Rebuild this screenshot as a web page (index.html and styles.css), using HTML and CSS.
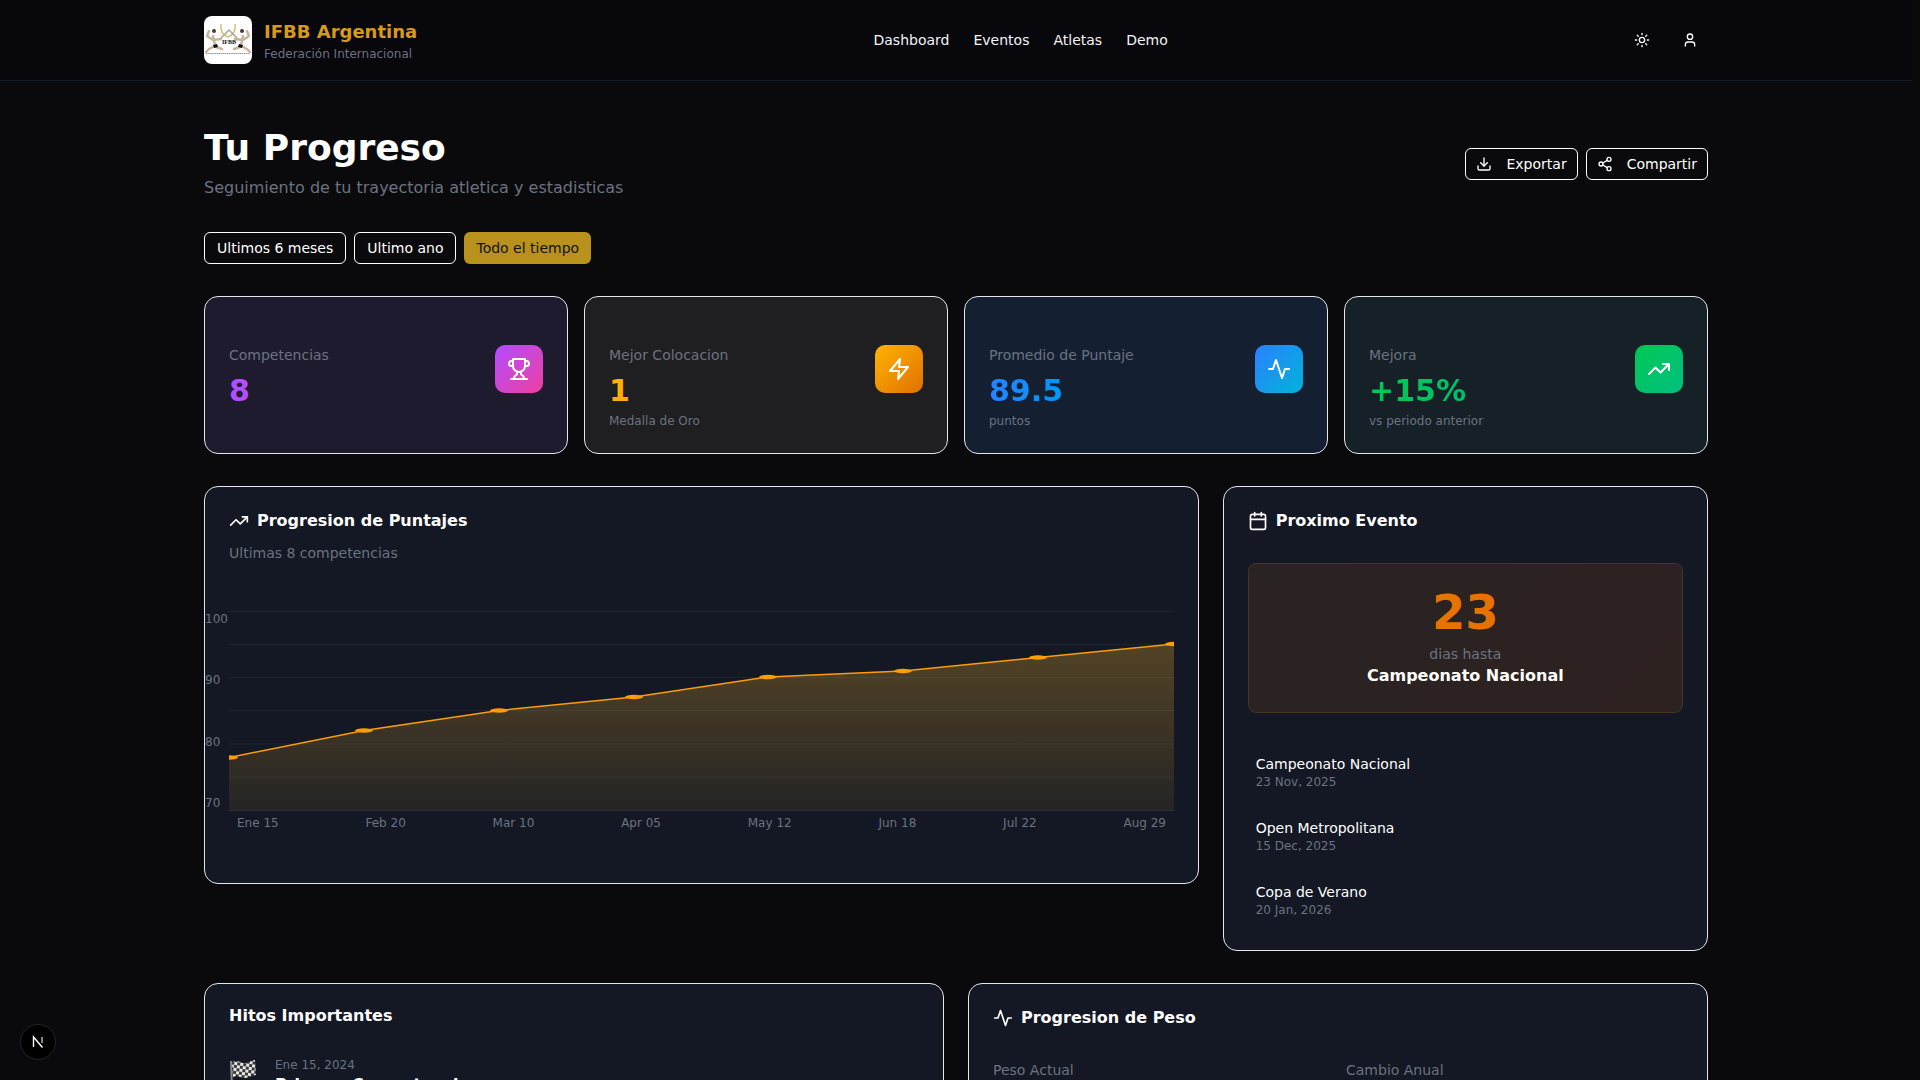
FILE: index.html
```html
<!DOCTYPE html>
<html lang="es">

<head>
    <meta charset="UTF-8">
    <title>IFBB Argentina - Tu Progreso</title>
    <link rel="stylesheet" href="styles.css">
</head>

<body>
    <header class="topbar">
        <div class="brand">
            <div class="brand-logo">
                <svg viewBox="0 0 48 48" width="48" height="48">
                    <path d="M17 8c-1 7 2 11 7 13 5-2 8-6 7-13" fill="none" stroke="#d9c07a" stroke-width="1.500"/>
                    <path d="M17 22l8-8 8 8" fill="none" stroke="#a9a49a" stroke-width="1.500"/>
                    <g class="logo-figure">
                        <path d="M5 15l-2 5 6 4 8-1"/>
                        <path d="M9 20l2 9"/>
                        <path d="M11 30l-6 3-3 3"/>
                        <path d="M12 31l6 2"/>
                        <path d="M43 15l2 5-6 4-8-1"/>
                        <path d="M39 20l-2 9"/>
                        <path d="M37 30l6 3 3 3"/>
                        <path d="M36 31l-6 2"/>
                    </g>
                    <circle cx="10" cy="15" r="2" fill="#4a3d30"/>
                    <circle cx="38" cy="15" r="2" fill="#4a3d30"/>
                    <path d="M9 29l4-1 1 3-4 1zM39 29l-4-1-1 3 4 1z" fill="#111"/>
                    <text x="25" y="28" class="logo-mark">IFBB</text>
                    <path d="M2 37.500h44" stroke="#8f8f8f" stroke-width="1" stroke-dasharray="1.500 .6"/>
                </svg>
            </div>
            <div>
                <div class="brand-name">IFBB Argentina</div>
                <div class="brand-sub">Federación Internacional</div>
            </div>
        </div>
        <nav class="topnav">
            <a>Dashboard</a>
            <a>Eventos</a>
            <a>Atletas</a>
            <a>Demo</a>
        </nav>
        <div class="topbar-actions">
            <svg class="icon-sm" viewBox="0 0 24 24"><circle cx="12" cy="12" r="4"/><path d="M12 2v2M12 20v2M4.930 4.930l1.410 1.410M17.660 17.660l1.410 1.410M2 12h2M20 12h2M6.340 17.660l-1.410 1.410M19.070 4.930l-1.410 1.410"/></svg>
            <svg class="icon-sm" viewBox="0 0 24 24"><path d="M19 21v-2a4 4 0 0 0-4-4H9a4 4 0 0 0-4 4v2"/><circle cx="12" cy="7" r="4"/></svg>
        </div>
    </header>

    <main class="page">
        <section class="page-head">
            <div>
                <h1>Tu Progreso</h1>
                <p class="page-sub">Seguimiento de tu trayectoria atletica y estadisticas</p>
            </div>
            <div class="head-actions">
                <button class="btn">
                    <svg class="icon-sm" viewBox="0 0 24 24"><path d="M21 15v4a2 2 0 0 1-2 2H5a2 2 0 0 1-2-2v-4"/><path d="M7 10l5 5 5-5"/><path d="M12 15V3"/></svg>
                    Exportar
                </button>
                <button class="btn">
                    <svg class="icon-sm" viewBox="0 0 24 24"><circle cx="18" cy="5" r="3"/><circle cx="6" cy="12" r="3"/><circle cx="18" cy="19" r="3"/><path d="M8.590 13.510l6.830 3.980M15.410 6.510l-6.820 3.980"/></svg>
                    Compartir
                </button>
            </div>
        </section>

        <div class="filters">
            <button class="pill">Ultimos 6 meses</button>
            <button class="pill">Ultimo ano</button>
            <button class="pill pill-active">Todo el tiempo</button>
        </div>

        <section class="stats">
            <div class="stat stat-purple">
                <div>
                    <div class="stat-label">Competencias</div>
                    <div class="stat-value">8</div>
                </div>
                <div class="stat-icon">
                    <svg class="icon-md" viewBox="0 0 24 24"><path d="M6 9H4.500a2.500 2.500 0 0 1 0-5H6"/><path d="M18 9h1.500a2.500 2.500 0 0 0 0-5H18"/><path d="M4 22h16"/><path d="M10 14.660V17c0 .55-.47.98-.97 1.210C7.850 18.750 7 20.240 7 22"/><path d="M14 14.660V17c0 .55.47.98.97 1.210C16.150 18.750 17 20.240 17 22"/><path d="M18 2H6v7a6 6 0 0 0 12 0V2z"/></svg>
                </div>
            </div>
            <div class="stat stat-amber">
                <div>
                    <div class="stat-label">Mejor Colocacion</div>
                    <div class="stat-value">1</div>
                    <div class="stat-note">Medalla de Oro</div>
                </div>
                <div class="stat-icon">
                    <svg class="icon-md" viewBox="0 0 24 24"><path d="M13 2L3 14h9l-1 8 10-12h-9l1-8z"/></svg>
                </div>
            </div>
            <div class="stat stat-blue">
                <div>
                    <div class="stat-label">Promedio de Puntaje</div>
                    <div class="stat-value">89.5</div>
                    <div class="stat-note">puntos</div>
                </div>
                <div class="stat-icon">
                    <svg class="icon-md" viewBox="0 0 24 24"><path d="M22 12h-4l-3 9L9 3l-3 9H2"/></svg>
                </div>
            </div>
            <div class="stat stat-green">
                <div>
                    <div class="stat-label">Mejora</div>
                    <div class="stat-value">+15%</div>
                    <div class="stat-note">vs periodo anterior</div>
                </div>
                <div class="stat-icon">
                    <svg class="icon-md" viewBox="0 0 24 24"><path d="M22 7l-8.500 8.500-5-5L2 17"/><path d="M16 7h6v6"/></svg>
                </div>
            </div>
        </section>

        <section class="row-main">
            <div class="card card-chart">
                <h2 class="card-title">
                    <svg class="icon-title" viewBox="0 0 24 24"><path d="M22 7l-8.500 8.500-5-5L2 17"/><path d="M16 7h6v6"/></svg>
                    Progresion de Puntajes
                </h2>
                <p class="card-sub">Ultimas 8 competencias</p>
                <div class="chart">
                    <div class="chart-y">
                        <span>100</span>
                        <span>90</span>
                        <span>80</span>
                        <span>70</span>
                    </div>
                    <svg class="chart-plot" viewBox="0 0 945 200" preserveAspectRatio="none">
                        <defs>
                            <linearGradient id="areaFill" x1="0" y1="0" x2="0" y2="1">
                                <stop offset="0" stop-color="#e6a92a" stop-opacity=".3"/>
                                <stop offset="1" stop-color="#e6a92a" stop-opacity=".08"/>
                            </linearGradient>
                        </defs>
                        <path d="M0 146.500L135 119.500L270 99.500L405 86L539 66L674 60L809 46.500L945 33L945 200L0 200Z" fill="url(#areaFill)"/>
                        <g class="chart-grid">
                            <path d="M0 .5H945M0 33.500H945M0 66.500H945M0 99.500H945M0 133H945M0 166H945M0 199.500H945"/>
                        </g>
                        <path class="chart-line" d="M0 146.500L135 119.500L270 99.500L405 86L539 66L674 60L809 46.500L945 33"/>
                        <g class="chart-dots">
                            <ellipse cx="0" cy="146.500" rx="9" ry="2.200"/>
                            <ellipse cx="135" cy="119.500" rx="9" ry="2.200"/>
                            <ellipse cx="270" cy="99.500" rx="9" ry="2.200"/>
                            <ellipse cx="405" cy="86" rx="9" ry="2.200"/>
                            <ellipse cx="539" cy="66" rx="9" ry="2.200"/>
                            <ellipse cx="674" cy="60" rx="9" ry="2.200"/>
                            <ellipse cx="809" cy="46.500" rx="9" ry="2.200"/>
                            <ellipse cx="945" cy="33" rx="9" ry="2.200"/>
                        </g>
                    </svg>
                    <div class="chart-x">
                        <span>Ene 15</span>
                        <span>Feb 20</span>
                        <span>Mar 10</span>
                        <span>Apr 05</span>
                        <span>May 12</span>
                        <span>Jun 18</span>
                        <span>Jul 22</span>
                        <span>Aug 29</span>
                    </div>
                </div>
            </div>

            <div class="card">
                <h2 class="card-title">
                    <svg class="icon-title" viewBox="0 0 24 24"><rect x="3" y="4" width="18" height="18" rx="2"/><path d="M16 2v4M8 2v4M3 10h18"/></svg>
                    Proximo Evento
                </h2>
                <div class="countdown">
                    <div class="countdown-num">23</div>
                    <div class="countdown-label">dias hasta</div>
                    <div class="countdown-name">Campeonato Nacional</div>
                </div>
                <ul class="events">
                    <li>
                        <div class="event-name">Campeonato Nacional</div>
                        <div class="event-date">23 Nov, 2025</div>
                    </li>
                    <li>
                        <div class="event-name">Open Metropolitana</div>
                        <div class="event-date">15 Dec, 2025</div>
                    </li>
                    <li>
                        <div class="event-name">Copa de Verano</div>
                        <div class="event-date">20 Jan, 2026</div>
                    </li>
                </ul>
            </div>
        </section>

        <section class="row-bottom">
            <div class="card">
                <h2 class="card-title card-title-plain">Hitos Importantes</h2>
                <div class="milestone">
                    <svg class="flag" viewBox="0 0 28 30">
                        <defs>
                            <pattern id="checks" width="6" height="6" patternUnits="userSpaceOnUse" patternTransform="rotate(8)">
                                <rect width="6" height="6" fill="#e8e8e8"/>
                                <rect width="3" height="3" fill="#3a3a3a"/>
                                <rect x="3" y="3" width="3" height="3" fill="#3a3a3a"/>
                            </pattern>
                        </defs>
                        <path d="M2 3l1 27" stroke="#8a8a8a" stroke-width="2"/>
                        <path d="M3 4c6-3 9 2 14 1 4-1 7-3 9-3l1 15c-4 0-6 3-11 3-4 0-8-3-12-1z" fill="url(#checks)"/>
                    </svg>
                    <div>
                        <div class="milestone-date">Ene 15, 2024</div>
                        <div class="milestone-name">Primera Competencia</div>
                    </div>
                </div>
            </div>
            <div class="card">
                <h2 class="card-title">
                    <svg class="icon-title" viewBox="0 0 24 24"><path d="M22 12h-4l-3 9L9 3l-3 9H2"/></svg>
                    Progresion de Peso
                </h2>
                <div class="weight-grid">
                    <div class="weight-label">Peso Actual</div>
                    <div class="weight-label">Cambio Anual</div>
                </div>
            </div>
        </section>
    </main>

    <div class="dev-badge">
        <svg viewBox="0 0 24 24" width="24" height="24"><path d="M7.500 17V7l9 10.500" fill="none" stroke="#fff" stroke-width="1.400"/><path d="M16 7v6" stroke="#bbb" stroke-width="1.400"/></svg>
    </div>
</body>

</html>
```

FILE: styles.css
```css
* {
    box-sizing: border-box;
}

html,
body {
    height: 1080px;
    margin: 0;
    overflow: hidden;
}

body {
    background-color: #0a0a0d;
    color: #fff;
    font-family: "DejaVu Sans", sans-serif;
    font-size: 14px;
    line-height: 20px;
}

h1,
h2,
p,
ul {
    margin: 0;
    padding: 0;
}

svg {
    display: block;
    flex: none;
}

/* icons */
.icon-sm,
.icon-md,
.icon-title {
    fill: none;
    stroke: #fff;
    stroke-linecap: round;
    stroke-linejoin: round;
    stroke-width: 2;
}

.icon-sm {
    width: 16px;
    height: 16px;
}

.icon-md {
    width: 24px;
    height: 24px;
}

.icon-title {
    width: 20px;
    height: 20px;
}

.topbar {
    align-items: center;
    background-color: #07070c;
    border-bottom: 1px solid #141824;
    display: flex;
    height: 81px;
    justify-content: space-between;
    margin-right: 8px;
    padding: 0 0 0 204px;
}

.brand {
    align-items: center;
    display: flex;
    gap: 12px;
    width: 669.500px;
}

.brand-logo {
    background-color: #fff;
    border-radius: 8px;
    height: 48px;
    overflow: hidden;
    width: 48px;
}

.logo-figure path {
    fill: none;
    stroke: #c8b49c;
    stroke-linecap: round;
    stroke-linejoin: round;
    stroke-width: 2.400;
}

.logo-mark {
    fill: #111;
    font-family: "Liberation Serif", serif;
    font-size: 6px;
    font-weight: bold;
    text-anchor: middle;
}

.brand-name {
    color: #d69a1a;
    font-size: 18px;
    font-weight: bold;
    line-height: 28px;
}

.brand-sub {
    color: #6b7280;
    font-size: 12px;
    line-height: 16px;
}

.topnav {
    display: flex;
    gap: 24px;
    flex: 1;
}

.topnav a {
    color: #f3f4f6;
}

.topbar-actions {
    align-items: center;
    display: flex;
    gap: 32px;
    padding-right: 214px;
}

/* page */
.page {
    padding: 0 212px 0 204px;
}

.page-head {
    align-items: center;
    display: flex;
    justify-content: space-between;
    padding-top: 47px;
}

h1 {
    font-size: 36px;
    font-weight: bold;
    line-height: 40px;
}

.page-sub {
    color: #6b7280;
    font-size: 16px;
    line-height: 24px;
    margin-top: 8px;
}

.head-actions {
    display: flex;
    gap: 8px;
}

.btn,
.pill {
    background-color: transparent;
    border: 1px solid #fff;
    border-radius: 6px;
    color: #fff;
    font-family: inherit;
    font-size: 14px;
    height: 32px;
    line-height: 20px;
    padding: 0 12px;
}

.btn {
    align-items: center;
    display: flex;
    gap: 14px;
    padding: 0 10px;
}

.filters {
    display: flex;
    gap: 8px;
    margin-top: 32px;
}

.pill-active {
    background-color: #b8921c;
    border: none;
    color: #111;
}

/* stat cards */
.stats {
    display: grid;
    gap: 16px;
    grid-template-columns: repeat(4, 1fr);
    margin-top: 32px;
}

.stat {
    align-items: flex-start;
    border: 1px solid #e5e7eb;
    border-radius: 14px;
    display: flex;
    justify-content: space-between;
    min-height: 158px;
    padding: 48px 24px 23px;
}

.stat-purple {
    background-color: #1d1b2d;
}

.stat-amber {
    background-color: #1f1f21;
}

.stat-blue {
    background-color: #142032;
}

.stat-green {
    background-color: #152127;
}

.stat-label {
    color: #6b7280;
}

.stat-value {
    font-size: 30px;
    font-weight: bold;
    line-height: 36px;
    margin-top: 8px;
    width: fit-content;
}

.stat-note {
    color: #6b7280;
    font-size: 12px;
    line-height: 16px;
    margin-top: 4px;
}

.stat-purple .stat-value {
    color: #b44dff;
}

.stat-amber .stat-value {
    color: #ffb000;
}

.stat-blue .stat-value {
    background: linear-gradient(90deg, #2583ff, #0097f5);
    -webkit-background-clip: text;
    background-clip: text;
    color: transparent;
}

.stat-green .stat-value {
    background: linear-gradient(90deg, #00c853, #00bf6a);
    -webkit-background-clip: text;
    background-clip: text;
    color: transparent;
}

.stat-icon {
    align-items: center;
    border-radius: 10px;
    display: flex;
    height: 48px;
    justify-content: center;
    width: 48px;
}

.stat-purple .stat-icon {
    background: linear-gradient(135deg, #b14dff, #ef3fa0);
}

.stat-amber .stat-icon {
    background: linear-gradient(135deg, #ffb400, #e07000);
}

.stat-blue .stat-icon {
    background: linear-gradient(135deg, #2b80ff, #00b4d8);
}

.stat-green .stat-icon {
    background: linear-gradient(135deg, #00c853, #00bf7f);
}

/* cards */
.row-main {
    align-items: start;
    display: grid;
    gap: 24px;
    grid-template-columns: repeat(3, 1fr);
    margin-top: 32px;
}

.card {
    background-color: #141824;
    border: 1px solid #e5e7eb;
    border-radius: 14px;
    padding: 24px;
}

.card-chart {
    grid-column: span 2;
    height: 398px;
}

.card-title {
    align-items: center;
    display: flex;
    font-size: 16px;
    font-weight: bold;
    gap: 8px;
    line-height: 20px;
}

.card-title-plain {
    line-height: 16px;
}

.card-sub {
    color: #6b7280;
    margin-top: 12px;
}

/* chart */
.chart {
    height: 240px;
    margin-top: 36px;
    position: relative;
}

.chart-plot {
    height: 200px;
    left: 0;
    position: absolute;
    top: 12px;
    width: 945px;
}

.chart-grid path {
    fill: none;
    stroke: rgba(255, 255, 255, .05);
    stroke-width: 1;
    vector-effect: non-scaling-stroke;
}

.chart-line {
    fill: none;
    stroke: #ff9d00;
    stroke-width: 1.500;
    vector-effect: non-scaling-stroke;
}

.chart-dots ellipse {
    fill: #ff9d00;
}

.chart-y {
    color: #6b7280;
    display: flex;
    flex-direction: column;
    font-size: 12px;
    height: 200px;
    justify-content: space-between;
    left: -24px;
    line-height: 16px;
    position: absolute;
    top: 12px;
}

.chart-x {
    color: #6b7280;
    display: flex;
    font-size: 12px;
    justify-content: space-between;
    left: 0;
    line-height: 16px;
    padding: 0 8px;
    position: absolute;
    top: 216px;
    width: 945px;
}

/* next event */
.countdown {
    background: linear-gradient(135deg, #292322, #2d2220);
    border: 1px solid #46341f;
    border-radius: 8px;
    margin-top: 32px;
    padding: 24px;
    text-align: center;
}

.countdown-num {
    color: #e67300;
    font-size: 48px;
    font-weight: bold;
    line-height: 48px;
}

.countdown-label {
    color: #6b7280;
    margin-top: 8px;
}

.countdown-name {
    font-size: 16px;
    font-weight: bold;
    line-height: 24px;
}

.events {
    display: flex;
    flex-direction: column;
    gap: 12px;
    list-style: none;
    margin-top: 33px;
}

.events li {
    padding: 8px;
}

.event-date {
    color: #6b7280;
    font-size: 12px;
    line-height: 16px;
}

/* bottom row */
.row-bottom {
    display: grid;
    gap: 24px;
    grid-template-columns: 1fr 1fr;
    margin-top: 32px;
}

.milestone {
    display: flex;
    gap: 18px;
    margin-top: 33px;
}

.flag {
    height: 30px;
    margin-top: 1px;
    width: 28px;
}

.milestone-date {
    color: #6b7280;
    font-size: 12px;
    line-height: 16px;
}

.milestone-name {
    font-size: 16px;
    font-weight: bold;
    line-height: 24px;
}

.weight-grid {
    column-gap: 16px;
    display: grid;
    grid-template-columns: 1fr 1fr;
    margin-top: 32px;
}

.weight-label {
    color: #6b7280;
}

.dev-badge {
    align-items: center;
    background-color: #000;
    border: 1px solid #262626;
    border-radius: 50%;
    bottom: 20px;
    display: flex;
    height: 36px;
    justify-content: center;
    left: 20px;
    position: fixed;
    width: 36px;
}
```
